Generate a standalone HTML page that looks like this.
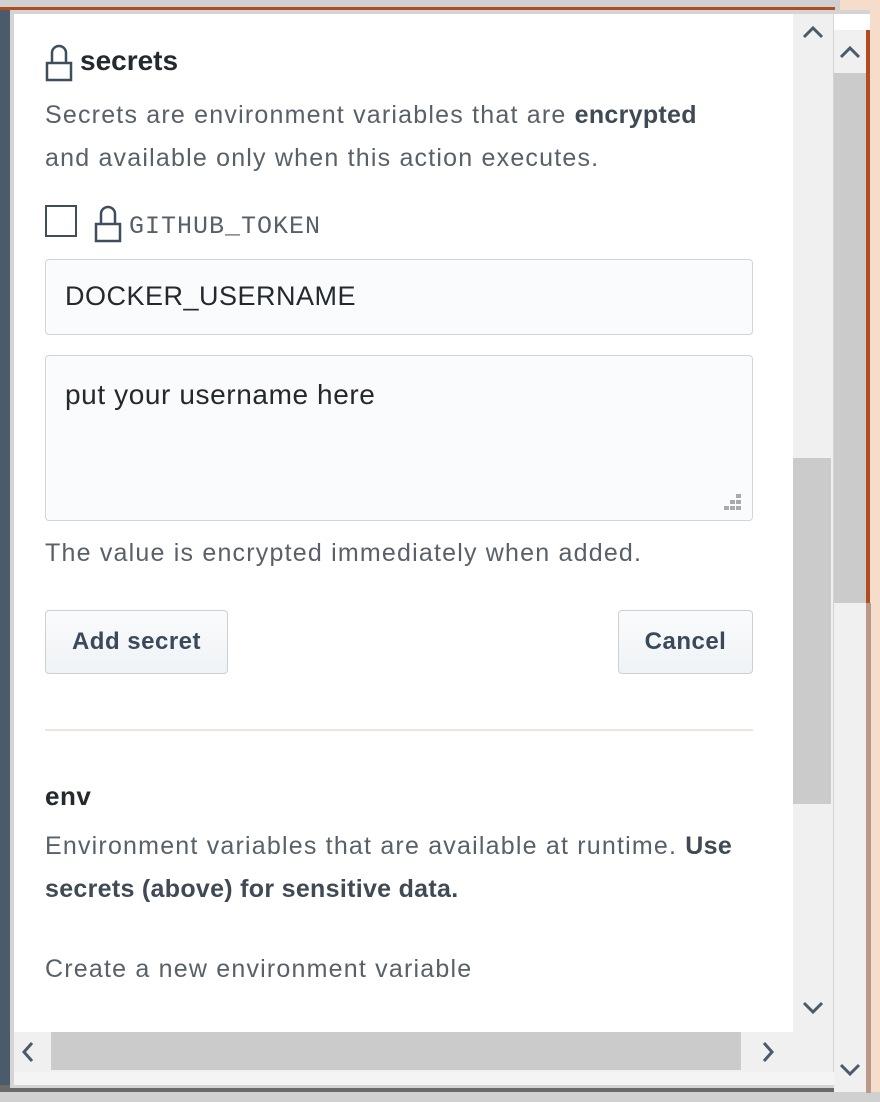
<!DOCTYPE html>
<html><head><meta charset="utf-8"><style>
*{margin:0;padding:0;box-sizing:border-box}
body{width:880px;height:1102px;position:relative;overflow:hidden;background:#f5dccb;font-family:"Liberation Sans",sans-serif}
.a{position:absolute}
.t{position:absolute;color:#586069;font-size:25px;letter-spacing:1.2px;white-space:nowrap}
.b{font-weight:bold}
.inp{position:absolute;background:#fafbfc;border:1px solid #d1d5da;border-radius:4px}
.btn{position:absolute;background:linear-gradient(#fafbfc,#eff3f6);border:1px solid #ccd0d4;border-radius:4px;color:#3a4a5a;font-weight:bold;font-size:24px;letter-spacing:0.5px;text-align:center;line-height:61px}
</style></head><body>
<div class="a" style="left:0;top:0;width:840px;height:20px;background:#d0d0d0"></div>
<div class="a" style="left:0;top:7px;width:835px;height:3px;background:#b24a22"></div>
<div class="a" style="left:0;top:10px;width:14px;height:1085px;background:#4a5b6b"></div>
<div class="a" style="left:0;top:1092px;width:880px;height:10px;background:#d0d0d0"></div>
<div class="a" style="left:0;top:1085px;width:870px;height:7px;background:#6a6a6a"></div>
<div class="a" style="left:10px;top:10px;width:860px;height:1078px;background:#d4d4d4"></div>
<div class="a" style="left:14px;top:14px;width:780px;height:1018px;background:#fff"></div>
<!-- inner vertical scrollbar -->
<div class="a" style="left:793px;top:14px;width:40px;height:1058px;background:#f0f0f0"></div>
<div class="a" style="left:793px;top:458px;width:38px;height:346px;background:#cbcbcb"></div>
<svg class="a" style="left:801px;top:998px" width="24" height="20"><path d="M3 5 L12 14 L21 5" stroke="#4a5b6b" stroke-width="3" fill="none"/></svg>
<svg class="a" style="left:801px;top:22px" width="24" height="20"><path d="M3 15 L12 6 L21 15" stroke="#4a5b6b" stroke-width="3" fill="none"/></svg>
<!-- horizontal scrollbar -->
<div class="a" style="left:14px;top:1032px;width:779px;height:40px;background:#f0f0f0"></div>
<div class="a" style="left:51px;top:1032px;width:690px;height:38px;background:#cbcbcb"></div>
<svg class="a" style="left:18px;top:1040px" width="20" height="24"><path d="M14 3 L6 12 L14 21" stroke="#4a5b6b" stroke-width="3" fill="none"/></svg>
<svg class="a" style="left:758px;top:1040px" width="20" height="24"><path d="M6 3 L14 12 L6 21" stroke="#4a5b6b" stroke-width="3" fill="none"/></svg>
<div class="a" style="left:14px;top:1072px;width:820px;height:13px;background:#f4f4f4"></div>
<!-- outer scrollbar -->
<div class="a" style="left:834px;top:30px;width:32px;height:1062px;background:#f0f0f0"></div>
<div class="a" style="left:834px;top:73px;width:32px;height:530px;background:#cbcbcb"></div>
<div class="a" style="left:866px;top:30px;width:4px;height:573px;background:#b24a22"></div>
<div class="a" style="left:866px;top:603px;width:5px;height:490px;background:#b8998a"></div>
<div class="a" style="left:834px;top:14px;width:36px;height:16px;background:#fff"></div>
<svg class="a" style="left:838px;top:42px" width="24" height="20"><path d="M3 15 L12 6 L21 15" stroke="#4a5b6b" stroke-width="3" fill="none"/></svg>
<svg class="a" style="left:838px;top:1060px" width="24" height="20"><path d="M3 5 L12 14 L21 5" stroke="#4a5b6b" stroke-width="3" fill="none"/></svg>

<!-- content -->
<svg class="a" style="left:44px;top:44px" width="30" height="38"><path d="M8 19 V9 a7 7 0 0 1 14 0 V19" stroke="#3f4e5c" stroke-width="2.5" fill="none"/><rect x="3" y="19" width="24" height="17" fill="#fff" stroke="#3f4e5c" stroke-width="2.5"/></svg>
<div class="t b" style="left:80px;top:45px;font-size:28px;letter-spacing:0;color:#24292e">secrets</div>
<div class="t" style="left:45px;top:101px">Secrets are environment variables that are <span class="b" style="color:#3f4a55;letter-spacing:0.3px">encrypted</span></div>
<div class="t" style="left:45px;top:144px">and available only when this action executes.</div>
<div class="a" style="left:45px;top:205px;width:32px;height:32px;border:2px solid #3f4e5c;background:#fff"></div>
<svg class="a" style="left:93px;top:205px" width="30" height="38"><path d="M8 19 V9 a7 7 0 0 1 14 0 V19" stroke="#3f4e5c" stroke-width="2.5" fill="none"/><rect x="3" y="19" width="24" height="17" fill="#fff" stroke="#3f4e5c" stroke-width="2.5"/></svg>
<div class="t" style="left:129px;top:212px;font-family:'Liberation Mono',monospace;font-size:25px;letter-spacing:1px">GITHUB_TOKEN</div>
<div class="inp" style="left:45px;top:259px;width:708px;height:76px"></div>
<div class="t" style="left:65px;top:281px;font-size:27px;letter-spacing:0.5px;color:#24292e">DOCKER_USERNAME</div>
<div class="inp" style="left:45px;top:355px;width:708px;height:166px"></div>
<div class="t" style="left:65px;top:379px;font-size:28px;letter-spacing:0.6px;color:#24292e">put your username here</div>
<svg class="a" style="left:722px;top:492px" width="24" height="24"><g fill="#aaa"><rect x="14" y="2" width="5" height="4"/><rect x="8" y="8" width="5" height="4"/><rect x="14" y="8" width="5" height="4"/><rect x="2" y="14" width="5" height="4"/><rect x="8" y="14" width="5" height="4"/><rect x="14" y="14" width="5" height="4"/></g></svg>
<div class="t" style="left:45px;top:539px">The value is encrypted immediately when added.</div>
<div class="btn" style="left:45px;top:610px;width:183px;height:64px">Add secret</div>
<div class="btn" style="left:618px;top:610px;width:135px;height:64px">Cancel</div>
<div class="a" style="left:45px;top:729px;width:708px;height:2px;background:#eee4dc"></div>
<div class="t b" style="left:45px;top:781px;font-size:26px;letter-spacing:0.5px;color:#24292e">env</div>
<div class="t" style="left:45px;top:832px">Environment variables that are available at runtime. <span class="b" style="color:#3f4a55;letter-spacing:0.3px">Use</span></div>
<div class="t b" style="left:45px;top:875px;color:#3f4a55;letter-spacing:0.3px">secrets (above) for sensitive data.</div>
<div class="t" style="left:45px;top:955px">Create a new environment variable</div>
</body></html>
